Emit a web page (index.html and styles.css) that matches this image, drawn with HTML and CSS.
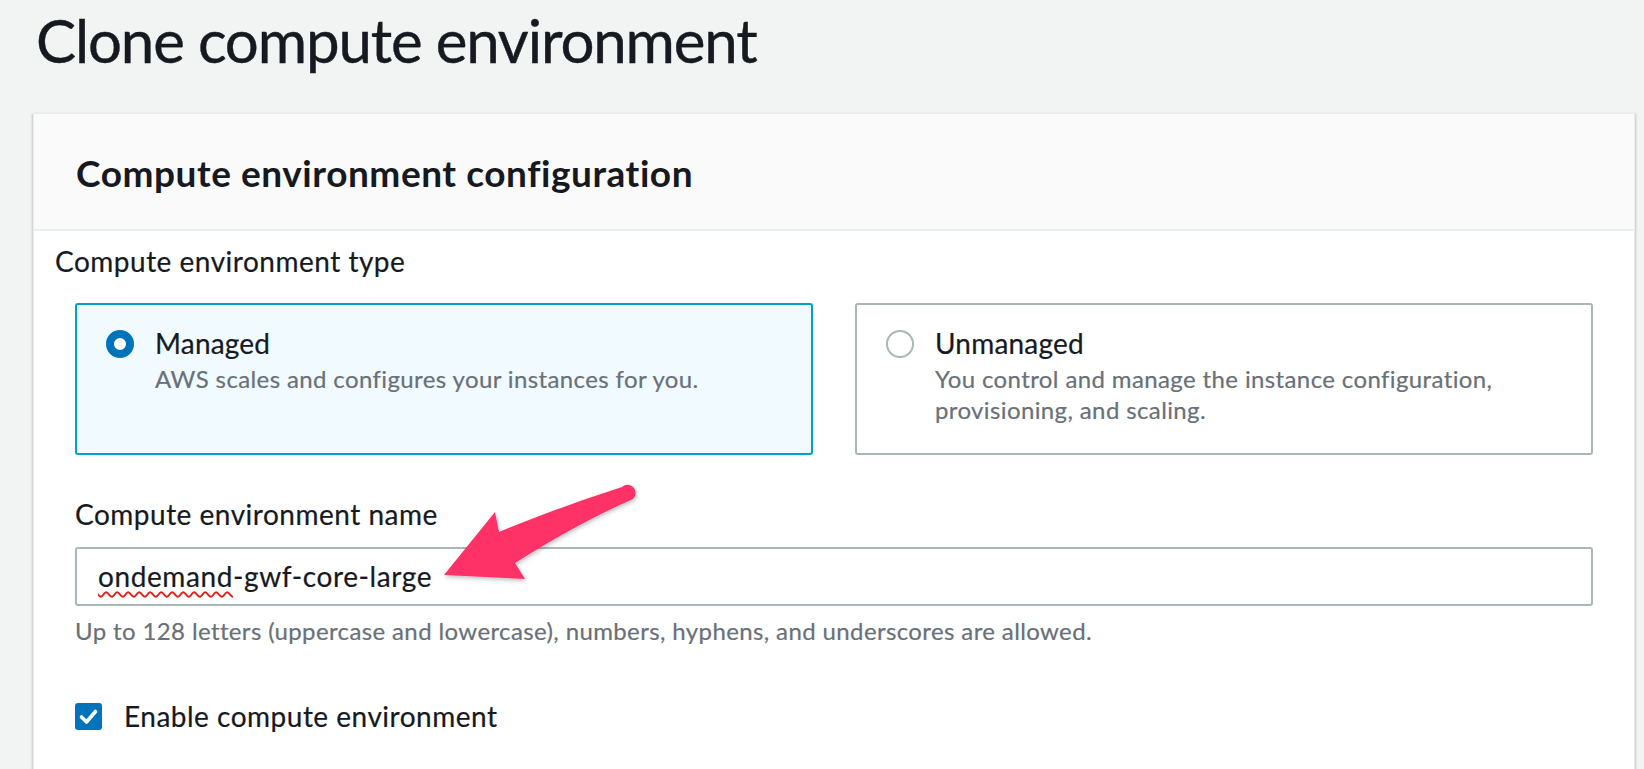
FILE: index.html
```html
<!DOCTYPE html>
<html lang="en">
<head>
<meta charset="utf-8">
<title>Clone compute environment</title>
<link rel="stylesheet" href="styles.css">
</head>
<body>
<div class="page">
  <h1 class="title">Clone compute environment</h1>
  <section class="card">
    <header class="card-header">
      <h2 class="card-title">Compute environment configuration</h2>
    </header>
    <div class="card-body">
      <div class="field-label type-label">Compute environment type</div>
      <div class="tiles">
        <div class="tile tile-selected">
          <span class="radio radio-on"></span>
          <div class="tile-text">
            <div class="tile-title">Managed</div>
            <div class="tile-desc">AWS scales and configures your instances for you.</div>
          </div>
        </div>
        <div class="tile">
          <span class="radio"></span>
          <div class="tile-text">
            <div class="tile-title">Unmanaged</div>
            <div class="tile-desc">You control and manage the instance configuration, provisioning, and scaling.</div>
          </div>
        </div>
      </div>
      <div class="field-label name-label">Compute environment name</div>
      <div class="input"><span class="misspelled">ondemand</span>-gwf-core-large</div>
      <div class="hint">Up to 128 letters (uppercase and lowercase), numbers, hyphens, and underscores are allowed.</div>
      <div class="check-row">
        <span class="checkbox">
          <svg viewBox="0 0 27 27" width="27" height="27"><polyline points="6.5,14 11.5,19 20.5,8.5" fill="none" stroke="#fff" stroke-width="3.6" stroke-linecap="round" stroke-linejoin="round"/></svg>
        </span>
        <span class="check-label">Enable compute environment</span>
      </div>
    </div>
  </section>
  <svg class="arrow" viewBox="0 0 1644 769" width="1644" height="769">
    <defs>
      <filter id="sh" x="-20%" y="-20%" width="140%" height="140%">
        <feDropShadow dx="1" dy="2" stdDeviation="2" flood-color="#000" flood-opacity="0.25"/>
      </filter>
    </defs>
    <path filter="url(#sh)" fill="#ff3068" d="M 622 487 Q 562 506 499 532 L 495 512 L 444 575 L 525 579 L 515 563 Q 578 523 633 499 A 6 6 0 0 0 622 487 Z"/>
  </svg>
</div>
</body>
</html>
```

FILE: styles.css
```css
html, body {
  margin: 0;
  padding: 0;
}
body {
  background: #f2f3f3;
  font-family: Lato, "Liberation Sans", sans-serif;
  color: #16191f;
  overflow: hidden;
}
.page {
  position: relative;
  width: 1644px;
  height: 769px;
  overflow: hidden;
}
.title {
  margin: 0;
  padding-left: 36px;
  font-size: 60px;
  font-weight: 400;
  line-height: 80px;
  letter-spacing: -1.15px;
  color: #16191f;
  -webkit-text-stroke: 0.4px #16191f;
}
.card {
  margin: 33px 9px 0 33px;
  background: #fff;
  border: 1px solid #eaeded;
  border-bottom: none;
  box-shadow: -1px 1px 2px 0 rgba(0, 28, 36, 0.18), 1px 1px 2px 0 rgba(0, 28, 36, 0.18);
  height: 700px;
}
.card-header {
  background: #fafafa;
  padding: 37px 43px 34px 42px;
  border-bottom: 2px solid #eaeded;
}
.card-title {
  margin: 0;
  font-size: 37px;
  line-height: 44px;
  font-weight: 700;
  letter-spacing: 0.55px;
}
.card-body {
  padding: 10px 41px 0 41px;
  letter-spacing: 0.5px;
  -webkit-text-stroke: 0.2px currentColor;
}
.field-label {
  font-size: 28px;
  line-height: 40px;
}
.type-label {
  margin-left: -20px;
}
.tiles {
  display: grid;
  grid-template-columns: 1fr 1fr;
  gap: 42px;
  margin-top: 22px;
}
.tile {
  display: flex;
  align-items: flex-start;
  gap: 21px;
  border: 2px solid #aab7b8;
  border-radius: 3px;
  padding: 18px 20px 28px 29px;
  background: #fff;
}
.tile-selected {
  border-color: #00a1c9;
  background: #f1faff;
}
.radio {
  flex: none;
  box-sizing: border-box;
  width: 28px;
  height: 28px;
  margin-top: 7px;
  border-radius: 50%;
  border: 2px solid #aab7b8;
  background: #fff;
}
.radio-on {
  border: 8px solid #0073bb;
}
.tile-title {
  font-size: 28px;
  line-height: 40px;
  letter-spacing: 0.2px;
}
.tile-desc {
  font-size: 24px;
  line-height: 31px;
  color: #687078;
  letter-spacing: 0.38px;
}
.name-label {
  margin-top: 39px;
}
.input {
  margin-top: 13px;
  border: 2px solid #aab7b8;
  border-radius: 3px;
  padding: 7px 21px 8px 21px;
  font-size: 28px;
  line-height: 40px;
  letter-spacing: 0.6px;
  background: #fff;
}
.misspelled {
  text-decoration: underline wavy #e0201a;
  text-decoration-thickness: 1.5px;
  text-underline-offset: 4px;
}
.hint {
  margin-top: 10px;
  font-size: 24px;
  line-height: 30px;
  color: #687078;
  letter-spacing: 0.38px;
}
.check-row {
  display: flex;
  align-items: center;
  gap: 22px;
  margin-top: 50px;
}
.checkbox {
  flex: none;
  width: 27px;
  height: 27px;
  border-radius: 3px;
  background: #0073bb;
  display: block;
}
.checkbox svg {
  display: block;
}
.check-label {
  font-size: 28px;
  line-height: 40px;
}
.arrow {
  position: absolute;
  left: 0;
  top: 0;
  pointer-events: none;
}
```
